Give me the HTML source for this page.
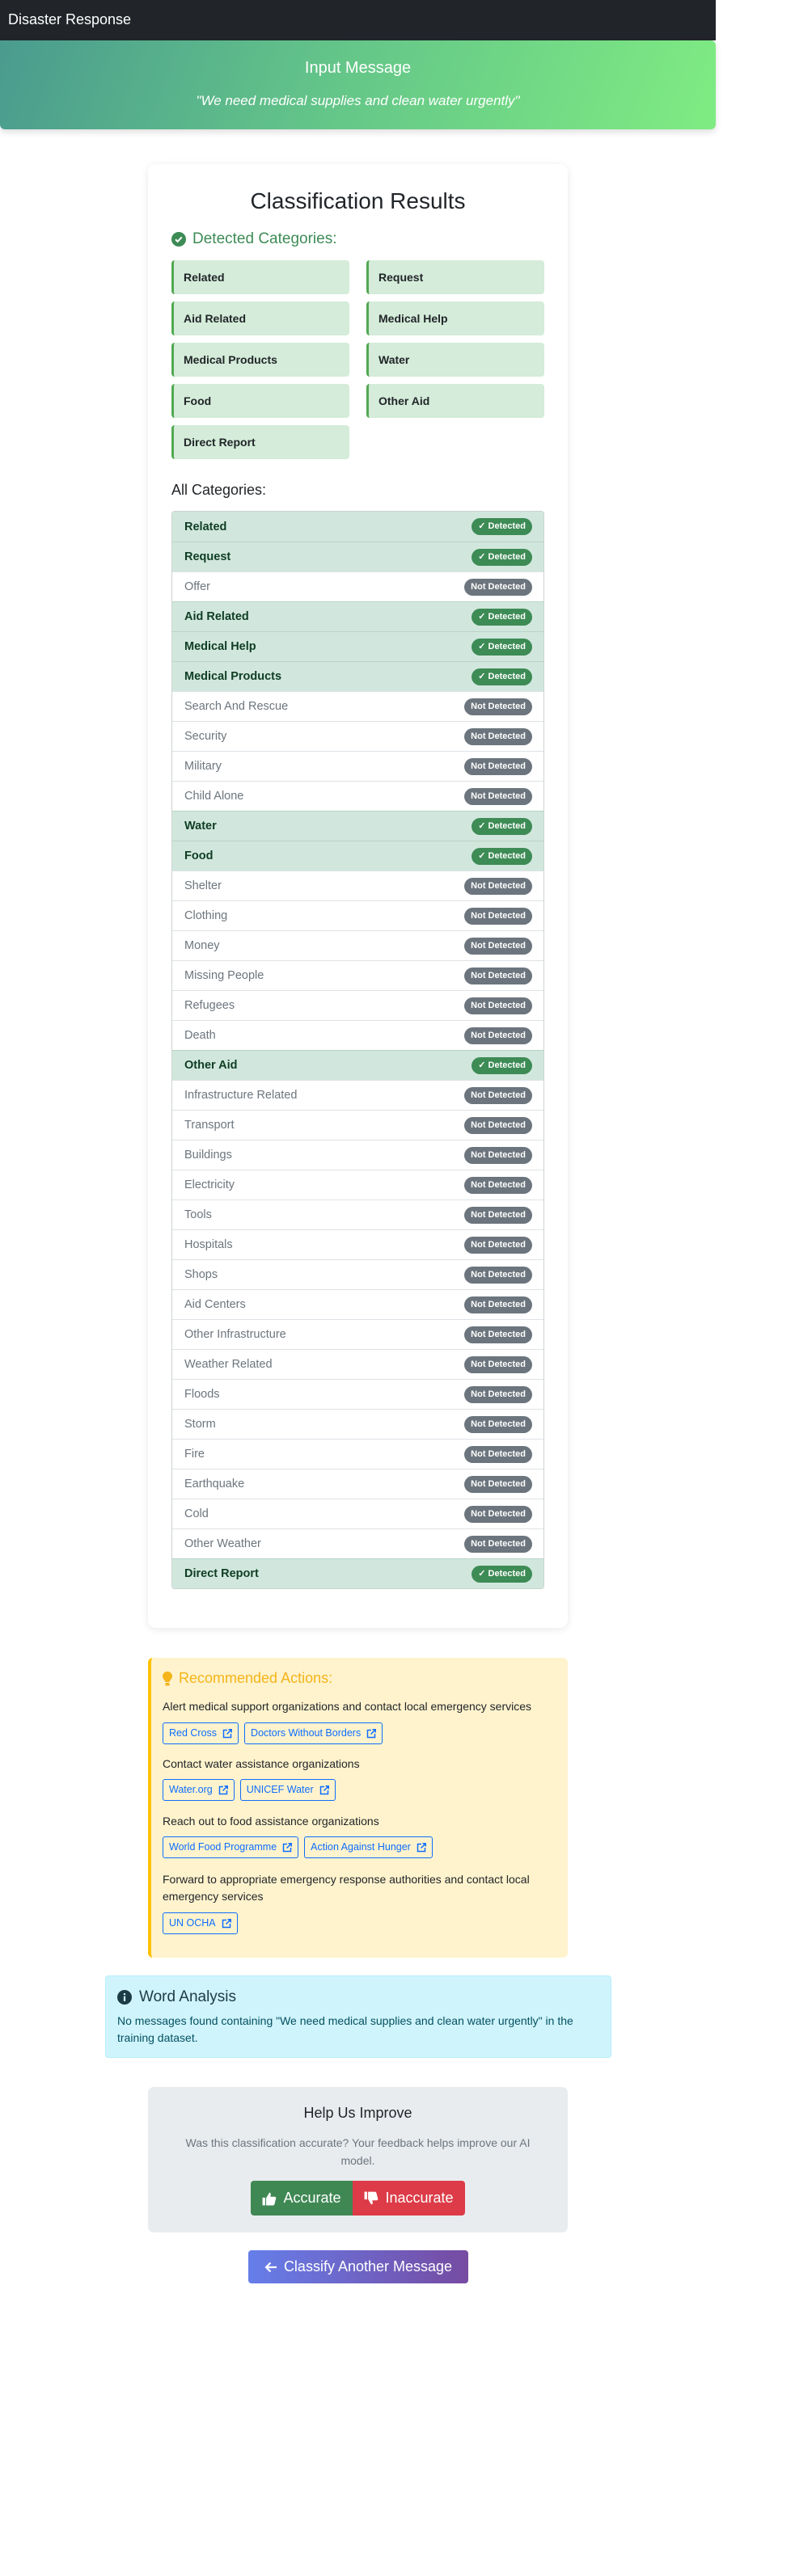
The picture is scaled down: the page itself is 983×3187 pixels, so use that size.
<!DOCTYPE html>
<html><head><meta charset="utf-8"><style>
*{box-sizing:border-box;margin:0;padding:0}
body{width:983px;height:3187px;background:#fff;font-family:"Liberation Sans",Arial,sans-serif;color:#212529;position:relative}
.nav{position:absolute;left:0;top:0;width:885px;height:50px;background:#212529;color:#fff;font-size:18px;padding:14px 0 0 10px}
.hero{position:absolute;left:0;top:50px;width:885px;height:110px;border-radius:0 6px 6px 6px;background:linear-gradient(110deg,#4a9b8e 0%,#63c489 45%,#7fec82 100%);color:#fff;text-align:center;box-shadow:0 4px 8px rgba(0,0,0,.12)}
.hero h2{font-size:20px;font-weight:normal;position:absolute;top:23px;width:100%}
.hero p{font-size:17px;font-style:italic;position:absolute;top:65px;width:100%}
.card{position:absolute;left:183px;top:203px;width:519px;height:1811px;background:#fff;border-radius:10px;box-shadow:0 2px 10px rgba(0,0,0,.09)}
.title{position:absolute;top:30px;width:100%;text-align:center;font-size:28px}
.dc{position:absolute;left:29px;top:82px;font-size:19px;color:#3d8b55;display:flex;align-items:center;gap:8px}
.grid{position:absolute;left:29px;top:119px;width:461px}
.gi{position:absolute;width:220px;height:42px;background:#d4ecd9;border-left:3px solid #52a852;border-radius:4px;font-size:14px;font-weight:bold;padding:13px 0 0 12px}
.allc{position:absolute;left:29px;top:393px;font-size:18px}
.tbl{position:absolute;left:29px;top:429px;width:461px;border:1px solid #ccd3d0;border-radius:4px;overflow:hidden}
.r{height:37px;border-top:1px solid #dee2e6;display:flex;align-items:center;justify-content:space-between;padding:0 14px 0 15px;font-size:14.5px;color:#6c757d}
.r:first-child{border-top:none}
.r.d{background:#d1e7dd;color:#0f3d23;font-weight:bold;border-top-color:#b9d3c6}
.b{font-size:11px;font-weight:bold;color:#fff;border-radius:11px;height:21px;line-height:21px;padding:0 8px;background:#6c757d}
.d .b{background:#3d8b55}
.rec{position:absolute;left:183px;top:2051px;width:519px;height:371px;background:#fff3cd;border-left:4px solid #ffc107;border-radius:6px;padding:0 0 0 14px}
.rec h4{position:absolute;top:15px;left:14px;font-size:18px;font-weight:normal;color:#f4b41a;display:flex;align-items:center;gap:8px}
.t{position:absolute;left:14px;font-size:14px;color:#212529;line-height:21px;width:490px}
.lk{position:absolute;left:14px;display:flex;gap:7px}
.lk span{border:1px solid #0d6efd;color:#0d6efd;font-size:12.5px;height:27px;line-height:25px;padding:0 7px;border-radius:3px;display:flex;align-items:center;gap:7px}
.wa{position:absolute;left:130px;top:2444px;width:626px;height:102px;background:#cff4fc;border:1px solid #b6effb;border-radius:4px;color:#055160}
.wa h4{position:absolute;left:14px;top:15px;font-size:19px;font-weight:normal;display:flex;align-items:center;gap:9px;color:#1d3b45}
.wa p{position:absolute;left:14px;top:45px;font-size:14px;line-height:21px;width:600px}
.fb{position:absolute;left:183px;top:2582px;width:519px;height:180px;background:#e9ecef;border-radius:7px;text-align:center}
.fb h5{position:absolute;top:22px;width:100%;font-size:18px;font-weight:normal}
.fb p{position:absolute;top:58px;left:30px;width:459px;font-size:14px;line-height:22px;color:#6c757d}
.btn{position:absolute;top:116px;height:43px;color:#fff;font-size:18px;display:flex;align-items:center;justify-content:center;gap:8px}
.cl{position:absolute;left:307px;top:2784px;width:272px;height:41px;border-radius:4px;background:linear-gradient(90deg,#667eea,#764ba2);color:#fff;font-size:18px;display:flex;align-items:center;justify-content:center;gap:8px}
</style></head><body>
<div class="nav">Disaster Response</div>
<div class="hero"><h2>Input Message</h2><p>"We need medical supplies and clean water urgently"</p></div>
<div class="card">
<div class="title">Classification Results</div>
<div class="dc"><svg width="18" height="18" viewBox="0 0 16 16"><circle cx="8" cy="8" r="8" fill="#3d8b55"/><path d="M4.5 8.2l2.3 2.3 4.5-4.8" stroke="#fff" stroke-width="1.8" fill="none"/></svg>Detected Categories:</div>
<div class="grid">
<div class="gi" style="left:0;top:0">Related</div><div class="gi" style="left:241px;top:0">Request</div>
<div class="gi" style="left:0;top:51px">Aid Related</div><div class="gi" style="left:241px;top:51px">Medical Help</div>
<div class="gi" style="left:0;top:102px">Medical Products</div><div class="gi" style="left:241px;top:102px">Water</div>
<div class="gi" style="left:0;top:153px">Food</div><div class="gi" style="left:241px;top:153px">Other Aid</div>
<div class="gi" style="left:0;top:204px">Direct Report</div>
</div>
<div class="allc">All Categories:</div>
<div class="tbl">
<div class="r d">Related<span class="b">✓ Detected</span></div>
<div class="r d">Request<span class="b">✓ Detected</span></div>
<div class="r">Offer<span class="b">Not Detected</span></div>
<div class="r d">Aid Related<span class="b">✓ Detected</span></div>
<div class="r d">Medical Help<span class="b">✓ Detected</span></div>
<div class="r d">Medical Products<span class="b">✓ Detected</span></div>
<div class="r">Search And Rescue<span class="b">Not Detected</span></div>
<div class="r">Security<span class="b">Not Detected</span></div>
<div class="r">Military<span class="b">Not Detected</span></div>
<div class="r">Child Alone<span class="b">Not Detected</span></div>
<div class="r d">Water<span class="b">✓ Detected</span></div>
<div class="r d">Food<span class="b">✓ Detected</span></div>
<div class="r">Shelter<span class="b">Not Detected</span></div>
<div class="r">Clothing<span class="b">Not Detected</span></div>
<div class="r">Money<span class="b">Not Detected</span></div>
<div class="r">Missing People<span class="b">Not Detected</span></div>
<div class="r">Refugees<span class="b">Not Detected</span></div>
<div class="r">Death<span class="b">Not Detected</span></div>
<div class="r d">Other Aid<span class="b">✓ Detected</span></div>
<div class="r">Infrastructure Related<span class="b">Not Detected</span></div>
<div class="r">Transport<span class="b">Not Detected</span></div>
<div class="r">Buildings<span class="b">Not Detected</span></div>
<div class="r">Electricity<span class="b">Not Detected</span></div>
<div class="r">Tools<span class="b">Not Detected</span></div>
<div class="r">Hospitals<span class="b">Not Detected</span></div>
<div class="r">Shops<span class="b">Not Detected</span></div>
<div class="r">Aid Centers<span class="b">Not Detected</span></div>
<div class="r">Other Infrastructure<span class="b">Not Detected</span></div>
<div class="r">Weather Related<span class="b">Not Detected</span></div>
<div class="r">Floods<span class="b">Not Detected</span></div>
<div class="r">Storm<span class="b">Not Detected</span></div>
<div class="r">Fire<span class="b">Not Detected</span></div>
<div class="r">Earthquake<span class="b">Not Detected</span></div>
<div class="r">Cold<span class="b">Not Detected</span></div>
<div class="r">Other Weather<span class="b">Not Detected</span></div>
<div class="r d">Direct Report<span class="b">✓ Detected</span></div>
</div>
</div>

<svg width="0" height="0" style="position:absolute"><defs><symbol id="ex" viewBox="0 0 12 12"><path d="M6 1.5H1.5v9h9V6" stroke="#0d6efd" stroke-width="1.5" fill="none"/><path d="M5.5 6.5L11 1M7.5 0.8H11.2V4.5" stroke="#0d6efd" stroke-width="1.5" fill="none"/></symbol></defs></svg>

<div class="rec">
<h4><svg width="12" height="18" viewBox="0 0 12 18"><path d="M6 0C2.7 0 0 2.6 0 5.8c0 2.2 1.4 3.6 2.4 5 .6.9.9 1.6.9 2.2h5.4c0-.6.3-1.3.9-2.2 1-1.4 2.4-2.8 2.4-5C12 2.6 9.3 0 6 0z" fill="#f4b41a"/><rect x="3.4" y="14" width="5.2" height="3.5" rx="1" fill="#f4b41a"/></svg>Recommended Actions:</h4>
<div class="t" style="top:50px">Alert medical support organizations and contact local emergency services</div>
<div class="lk" style="top:80px"><span>Red Cross <svg width="12" height="12"><use href="#ex"/></svg></span><span>Doctors Without Borders <svg width="12" height="12"><use href="#ex"/></svg></span></div>
<div class="t" style="top:121px">Contact water assistance organizations</div>
<div class="lk" style="top:150px"><span>Water.org <svg width="12" height="12"><use href="#ex"/></svg></span><span>UNICEF Water <svg width="12" height="12"><use href="#ex"/></svg></span></div>
<div class="t" style="top:192px">Reach out to food assistance organizations</div>
<div class="lk" style="top:221px"><span>World Food Programme <svg width="12" height="12"><use href="#ex"/></svg></span><span>Action Against Hunger <svg width="12" height="12"><use href="#ex"/></svg></span></div>
<div class="t" style="top:264px">Forward to appropriate emergency response authorities and contact local emergency services</div>
<div class="lk" style="top:315px"><span>UN OCHA <svg width="12" height="12"><use href="#ex"/></svg></span></div>
</div>

<div class="wa"><h4><svg width="18" height="18" viewBox="0 0 16 16"><circle cx="8" cy="8" r="8" fill="#1d3b45"/><rect x="7" y="6.8" width="2" height="5.5" fill="#cff4fc"/><circle cx="8" cy="4.5" r="1.1" fill="#cff4fc"/></svg>Word Analysis</h4>
<p>No messages found containing "We need medical supplies and clean water urgently" in the training dataset.</p></div>

<div class="fb"><h5>Help Us Improve</h5>
<p>Was this classification accurate? Your feedback helps improve our AI model.</p>
<div class="btn" style="left:127px;width:126px;background:#3f8854;border-radius:4px 0 0 4px"><svg width="18" height="18" viewBox="0 0 16 16"><rect x="0.5" y="7" width="3" height="8.5" fill="#fff"/><path d="M4.5 7.5L8 1.5c1.2 0 1.8.8 1.6 2L9.2 6h4.6c1.1 0 1.8 1 1.5 2l-1.6 6.2c-.2.8-.9 1.3-1.7 1.3H4.5z" fill="#fff"/></svg>Accurate</div>
<div class="btn" style="left:253px;width:139px;background:#dc3b47;border-radius:0 4px 4px 0"><svg width="18" height="18" viewBox="0 0 16 16" style="transform:scaleY(-1)"><rect x="0.5" y="7" width="3" height="8.5" fill="#fff"/><path d="M4.5 7.5L8 1.5c1.2 0 1.8.8 1.6 2L9.2 6h4.6c1.1 0 1.8 1 1.5 2l-1.6 6.2c-.2.8-.9 1.3-1.7 1.3H4.5z" fill="#fff"/></svg>Inaccurate</div>
</div>
<div class="cl"><svg width="16" height="16" viewBox="0 0 16 16"><path d="M15 8H2M7.5 2.5L2 8l5.5 5.5" stroke="#fff" stroke-width="2.2" fill="none"/></svg> Classify Another Message</div>
</body></html>
